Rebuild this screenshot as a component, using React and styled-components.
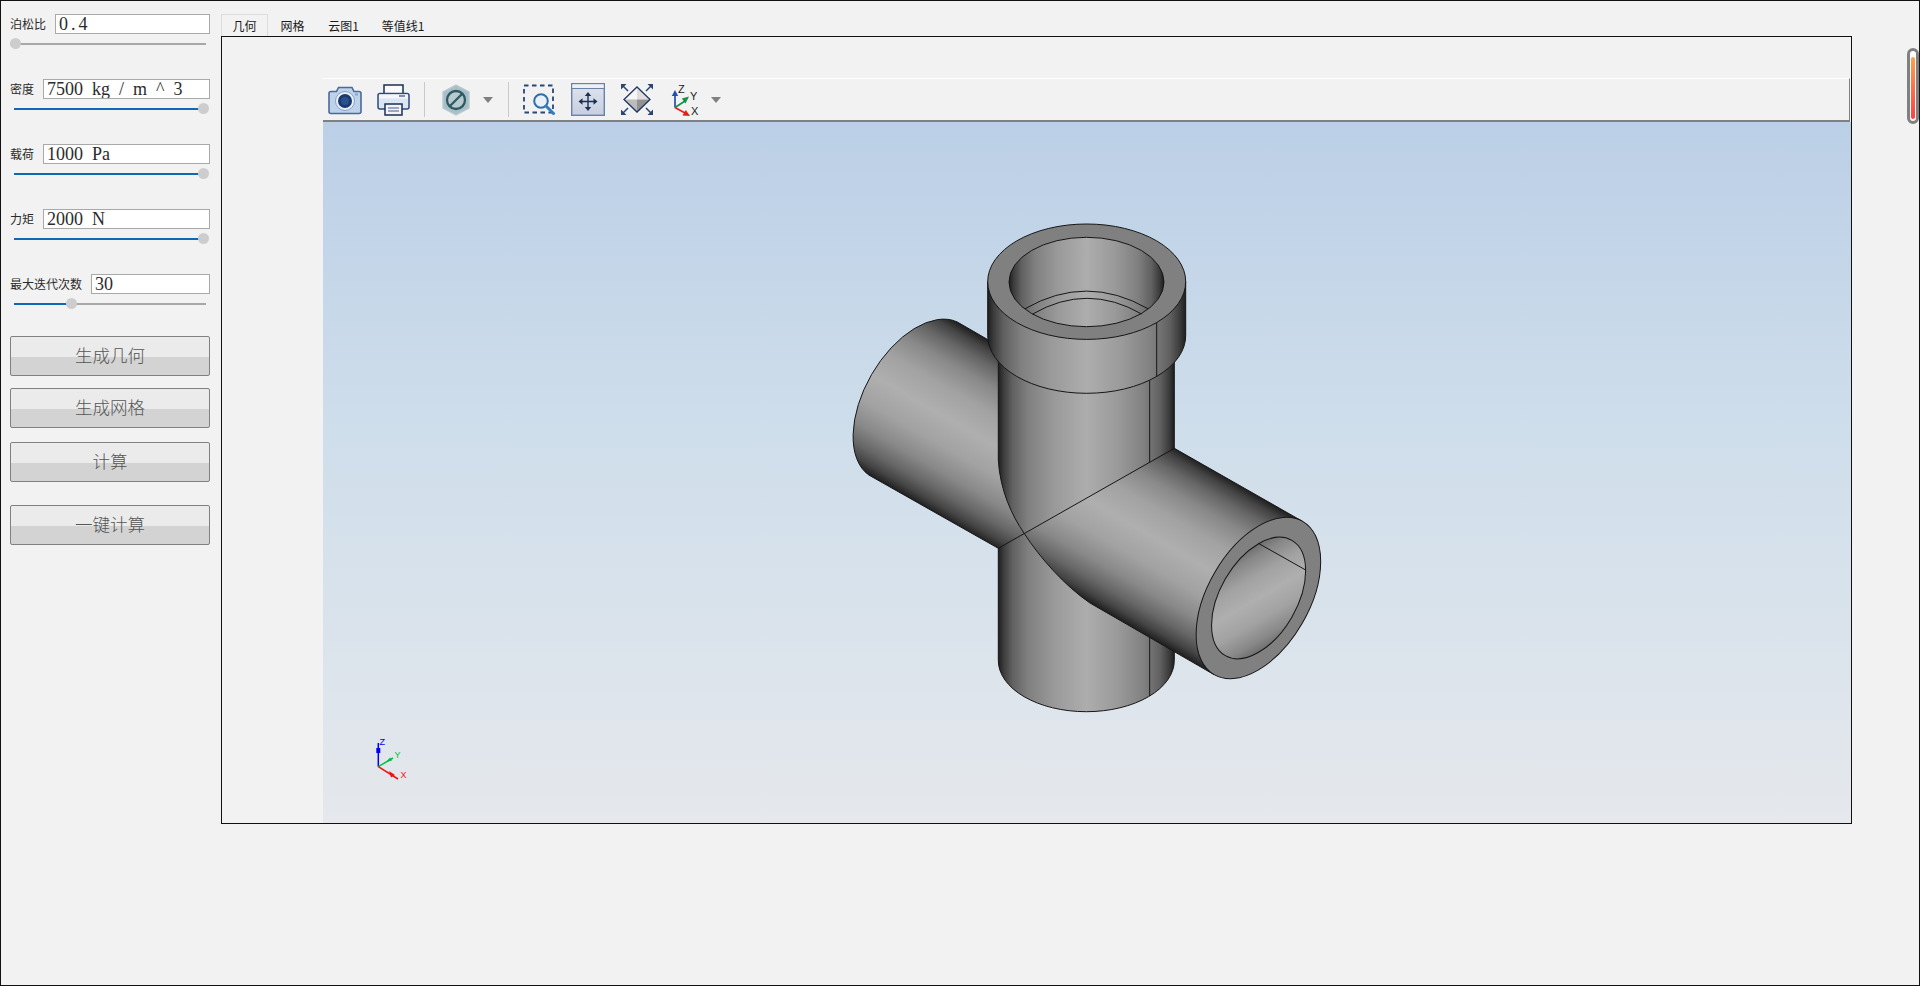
import React from 'react';
import styled, { createGlobalStyle } from 'styled-components';

const Global = createGlobalStyle`
  html, body { margin: 0; padding: 0; background: #f2f2f2; width: 1920px; height: 986px; overflow: hidden; }
  * { box-sizing: border-box; }
`;
const CJK = '"Noto Sans CJK SC", "Noto Sans", sans-serif';

const Window = styled.div`
  width: 1920px; height: 986px; border: 1px solid #111; background: #f2f2f2;
  display: flex; overflow: hidden; font-family: ${CJK}; color: #222;
`;
const Sidebar = styled.aside`
  width: 200px; margin: 13px 0 0 9px; flex: none; display: flex; flex-direction: column;
`;
const FieldRow = styled.div`display: flex; align-items: center; height: 20px; gap: 9px;`;
const FieldLabel = styled.label`font-size: 12px; line-height: 20px; white-space: nowrap; color: #2a2a2a;`;
const FieldInput = styled.input`
  flex: 1; min-width: 0; height: 20px; border: 1px solid #a9a9a9; background: #fff; padding: 0 3px;
  font: 18px/18px "Liberation Serif", serif; word-spacing: 4.5px; letter-spacing: ${p => p.$track || 0}px;
  color: #2b2b2b; outline: none; border-radius: 0;
`;
const SliderBox = styled.div`position: relative; height: 20px; margin-bottom: 25px;`;
const Track = styled.div`
  position: absolute; left: ${p => p.$start}px; right: 4px; top: 9px; height: 2px; background: #a8a8a8;
`;
const Fill = styled.div`height: 100%; background: #1067b5;`;
const Thumb = styled.div`
  position: absolute; top: 4px; width: 11px; height: 11px; margin-left: -5.5px; border-radius: 50%;
  background: #cdcdcd;
`;
const ActionButton = styled.button`
  display: block; width: 200px; height: 40px; margin: ${p => p.$top}px 0 0; padding: 0 0 2px;
  border: 1px solid #808080; border-radius: 2px;
  background: linear-gradient(#ebebeb 0, #ebebeb 52%, #d3d3d3 52%, #d3d3d3 100%);
  font: 300 17.5px/1 ${CJK}; color: #555;
`;
const Main = styled.main`width: 1631px; margin: 13px 0 0 11px; flex: none; display: flex; flex-direction: column;`;
const TabBar = styled.div`display: flex; height: 22px;`;
const Tab = styled.div`
  width: ${p => p.$w}px; height: 22px; font-size: 12px; line-height: 22px; text-align: center; color: #1a1a1a;
  border: 1px solid ${p => (p.$active ? '#dcdcdc' : 'transparent')}; border-bottom: 0;
`;
const Frame = styled.section`
  height: 788px; border: 1px solid #111; padding: 41px 0 0 101px; display: flex; flex-direction: column;
`;
const Toolbar = styled.div`
  height: 44px; flex: none; display: flex; align-items: center; padding-left: 5px; background: #f2f2f2;
  border-top: 1px solid #fff; border-bottom: 2px solid #808080; border-right: 1px solid #808080; margin-right: 1px;
`;
const Tool = styled.svg`display: block; flex: none; margin-left: ${p => p.$gap || 0}px;`;
const Sep = styled.div`width: 1px; height: 35px; background: #c9c9c9; flex: none; margin-left: ${p => p.$gap}px;`;
const Caret = styled.div`
  width: 0; height: 0; flex: none; margin-left: ${p => p.$gap}px;
  border-left: 5px solid transparent; border-right: 5px solid transparent; border-top: 6px solid #808080;
`;
const Canvas = styled.div`flex: 1; background: linear-gradient(#bbcfe6 0%, #cfdeeb 45%, #e5e8ec 100%);`;
const Scene = styled.svg`display: block; width: 1528px; height: 700px;`;
const ScrollRail = styled.div`
  width: 12px; height: 76px; flex: none; margin: 47px 0 0 55px; border: 3px solid #808080; border-radius: 6px;
  background: #fff; padding: 6px 1px 2px;
`;
const ScrollInner = styled.div`
  height: 100%; border-radius: 2px; background: linear-gradient(#ff9f4f, #ff4040);
`;

const Slider = ({ start, pos, fill }) => (
  <SliderBox>
    <Track $start={start}>{fill > 0 && <Fill style={{ width: fill }} />}</Track>
    <Thumb style={{ left: pos }} />
  </SliderBox>
);

const fields = [
  { label: '泊松比', value: '0.4', track: 3, start: 0, pos: 5, fill: 0 },
  { label: '密度', value: '7500 kg / m ^ 3', start: 4, pos: 193, fill: 189 },
  { label: '载荷', value: '1000 Pa', start: 4, pos: 193, fill: 189 },
  { label: '力矩', value: '2000 N', start: 4, pos: 193, fill: 189 },
  { label: '最大迭代次数', value: '30', start: 4, pos: 61, fill: 57 },
];

const INK = '#1b2f55';
const SANS = 'Liberation Sans, sans-serif';

const Camera = () => (
  <Tool width="34" height="30" viewBox="0 0 34 30">
    <path d="M1 8.500Q1 6.500 3 6.500H8.500L10.500 2.500H24L26 6.500H31Q33 6.500 33 8.500V26.500Q33 28.500 31 28.500H3Q1 28.500 1 26.500Z" fill="#bfd2ec" stroke="#4a6a9a" strokeWidth="1.600" />
    <circle cx="17" cy="16" r="9.500" fill="#eaf0f8" stroke="#86a2c8" />
    <circle cx="17" cy="16" r="7" fill="#1d3a6e" />
    <circle cx="17" cy="16" r="4" fill="#2a5291" />
    <rect x="27" y="8.500" width="3" height="2" fill="#8aa2c4" />
  </Tool>
);
const Printer = () => (
  <Tool width="33" height="33" viewBox="0 0 33 33" $gap={15}>
    <path d="M7 12V2H26V12" fill="#fafafa" stroke={INK} strokeWidth="1.500" />
    <path d="M3 10.500H30Q32 10.500 32 12.500V24Q32 26 30 26H3Q1 26 1 24V12.500Q1 10.500 3 10.500Z" fill="#dbe5f3" stroke="#2f4a7c" strokeWidth="1.500" />
    <rect x="2" y="11.500" width="29" height="4" fill="#f4f6fa" />
    <rect x="22" y="12" width="6" height="2" fill="#7d8fb0" />
    <path d="M8 21H25V32H8Z" fill="#f3f3f3" stroke={INK} strokeWidth="1.500" />
    <path d="M11 25H22M11 28H22" stroke="#7d8fb0" strokeWidth="1.300" />
  </Tool>
);
const Hex = () => (
  <Tool width="28" height="32" viewBox="0 0 28 32" $gap={17}>
    <path d="M14 1L27 8V24L14 31L1 24V8Z" fill="#a8bfc6" stroke="#b7cbd0" strokeWidth="1.400" />
    <circle cx="14" cy="16" r="9" fill="#b7cace" stroke="#2f5964" strokeWidth="2.300" />
    <path d="M8 22L20 10" stroke="#2f5964" strokeWidth="2.300" />
  </Tool>
);
const ZoomFit = () => (
  <Tool width="32" height="32" viewBox="0 0 32 32" $gap={14}>
    <rect x="1" y="1.500" width="29" height="27" fill="none" stroke="#2a4674" strokeWidth="1.800" strokeDasharray="4.500 3.500" />
    <circle cx="18" cy="17" r="6.800" fill="#e9f0f8" stroke="#2f6fa8" strokeWidth="2" />
    <path d="M23 22L30.500 29.500" stroke="#2f7fc1" strokeWidth="3" strokeLinecap="round" />
  </Tool>
);
const Arrow4 = ({ c }) => (
  <g fill={c} stroke={c}>
    <path d="M17 11V26M9.500 18.500H24.500" strokeWidth="1.400" />
    <path d="M17 9L13.800 13H20.200ZM17 28L13.800 24H20.200ZM7.500 18.500L11.500 15.300V21.700ZM26.500 18.500L22.500 15.300V21.700Z" stroke="none" />
  </g>
);
const Fit = () => (
  <Tool width="34" height="33" viewBox="0 0 34 33" $gap={16}>
    <defs>
      <linearGradient id="fitBg" x1="0" y1="0" x2="0" y2="1">
        <stop offset="0" stopColor="#dfe4ee" />
        <stop offset="1" stopColor="#c6cfe0" />
      </linearGradient>
    </defs>
    <rect x="0.700" y="0.700" width="32.600" height="31.600" fill="url(#fitBg)" stroke="#6a82a6" strokeWidth="1.400" />
    <rect x="1.400" y="1.400" width="31.200" height="3.500" fill="#eef0f5" />
    <path d="M1 5.500H33" stroke="#6a82a6" strokeWidth="1" />
    <Arrow4 c={INK} />
  </Tool>
);
const Iso = () => (
  <Tool width="34" height="33" viewBox="0 0 34 33" $gap={15}>
    <path d="M17 4L17 16.500H4Z" fill="#f6f6f6" />
    <path d="M17 4L30 16.500H17Z" fill="#dedede" />
    <path d="M4 16.500H17V29Z" fill="#bcbcbc" />
    <path d="M17 16.500H30L17 29Z" fill="#929292" />
    <path d="M17 4L30 16.500L17 29L4 16.500Z" fill="none" stroke="#20365f" strokeWidth="1.300" />
    <path d="M8 8L3 3M26 8L31 3M8 25L3 30M26 25L31 30" stroke="#2a4674" strokeWidth="1.500" />
    <path d="M1 1H6.500L1 6.500ZM33 1H27.500L33 6.500ZM1 32H6.500L1 26.500ZM33 32H27.500L33 26.500Z" fill="#2a4674" />
  </Tool>
);
const Triad = () => (
  <Tool width="31" height="34" viewBox="0 0 31 34" $gap={15}>
    <path d="M6 24.500V11" stroke="#1f4fb5" strokeWidth="1.700" />
    <path d="M6 7L2.800 13H9.200Z" fill="#1f4fb5" />
    <path d="M6 24.500L16 18" stroke="#15924a" strokeWidth="1.700" />
    <path d="M20 13.500L12.800 15.500L16.500 20.500Z" fill="#15924a" />
    <path d="M6 24.500L16 30" stroke="#e02020" strokeWidth="1.700" />
    <path d="M21 33L13.500 32.500L16.800 27Z" fill="#e02020" />
    <text x="9" y="9.500" fontSize="11" fontFamily={SANS} fill="#222">Z</text>
    <text x="21" y="17" fontSize="11" fontFamily={SANS} fill="#222">Y</text>
    <text x="22" y="31.500" fontSize="11" fontFamily={SANS} fill="#222">X</text>
  </Tool>
);

const bodyStops = [
  [0, '#1e1e1e'], [0.03, '#3c3c3c'], [0.08, '#606060'], [0.17, '#808080'], [0.32, '#9a9a9a'], [0.5, '#adadad'],
  [0.68, '#9a9a9a'], [0.83, '#808080'], [0.92, '#606060'], [0.97, '#3c3c3c'], [1, '#1e1e1e'],
];
const armStops = [
  [0, '#1e1e1e'], [0.05, '#444444'], [0.12, '#666666'], [0.22, '#888888'], [0.35, '#a2a2a2'], [0.5, '#afafaf'],
  [0.65, '#a2a2a2'], [0.78, '#888888'], [0.88, '#666666'], [0.95, '#444444'], [1, '#1e1e1e'],
];
const Grad = ({ id, x1, y1, x2, y2, stops }) => (
  <linearGradient id={id} gradientUnits="userSpaceOnUse" x1={x1} y1={y1} x2={x2} y2={y2}>
    {stops.map(([o, c]) => <stop key={o} offset={o} stopColor={c} />)}
  </linearGradient>
);

const Model = () => (
  <g stroke="#161616" strokeWidth="1" strokeLinejoin="round">
    <path d="M998.300 300V660.400A88 51.300 0 0 0 1174.300 660.400V300Z" fill="url(#gBody)" />
    <path d="M1149.700 380V696" fill="none" />
    <path d="M957.300 322L998.300 345.700V460C1000 490 1012 516 1024.300 533.500L998.300 548.300L868.800 475A88.500 50.600 -60 0 1 957.300 322Z" fill="url(#gLeft)" />
    <path d="M1174.300 448.300L1302.600 521.400L1214 674.600L1090 603C1065 586 1040 558 1024.300 533.500Z" fill="url(#gRight)" />
    <ellipse cx="1258.400" cy="598" rx="88.500" ry="50.600" transform="rotate(-60 1258.400 598)" fill="#808080" />
    <ellipse cx="1258.600" cy="598" rx="66.500" ry="38.400" transform="rotate(-60 1258.600 598)" fill="url(#gBore)" />
    <path d="M1258.300 543.300L1305.700 570" fill="none" />
    <path d="M987.700 281.700V335.600A99 57.700 0 0 0 1185.700 335.600V281.700Z" fill="url(#gCollar)" />
    <path d="M1156.700 322.700V376.700" fill="none" />
    <ellipse cx="1086.700" cy="281.700" rx="99" ry="57.700" fill="#808080" />
    <ellipse cx="1086.500" cy="282" rx="77.500" ry="44.700" fill="url(#gInner)" />
    <path d="M1025 308.700Q1086.500 273.500 1148 308.700" fill="none" />
    <path d="M1032.700 314Q1087 282.600 1141.700 314" fill="none" />
  </g>
);

const MiniTriad = () => (
  <g>
    <path d="M378.300 766.700V743" stroke="#0000ee" strokeWidth="1.500" />
    <rect x="376.300" y="748" width="4" height="5" fill="#0000ee" />
    <path d="M378.300 766.700L393 758" stroke="#00c040" strokeWidth="1.500" />
    <path d="M386 762L390 757.500L392 760.500Z" fill="#00c040" />
    <path d="M378.300 766.700L398 779" stroke="#f01010" strokeWidth="1.500" />
    <path d="M389 771L395 775L391 777.500Z" fill="#f01010" />
    <text x="379.500" y="745" fontSize="9" fontFamily={SANS} fill="#0000ee">Z</text>
    <text x="394.500" y="758" fontSize="9" fontFamily={SANS} fill="#00c040">Y</text>
    <text x="400.500" y="778" fontSize="9" fontFamily={SANS} fill="#f01010">X</text>
  </g>
);

export default function App() {
  return (
    <Window>
      <Global />
      <Sidebar>
        {fields.map(f => (
          <div key={f.label}>
            <FieldRow>
              <FieldLabel>{f.label}</FieldLabel>
              <FieldInput readOnly value={f.value} $track={f.track} />
            </FieldRow>
            <Slider start={f.start} pos={f.pos} fill={f.fill} />
          </div>
        ))}
        <ActionButton $top={-3}>生成几何</ActionButton>
        <ActionButton $top={12}>生成网格</ActionButton>
        <ActionButton $top={14}>计算</ActionButton>
        <ActionButton $top={23}>一键计算</ActionButton>
      </Sidebar>
      <Main>
        <TabBar>
          <Tab $active $w={47}>几何</Tab>
          <Tab $w={49}>网格</Tab>
          <Tab $w={53}>云图1</Tab>
          <Tab $w={66}>等值线1</Tab>
        </TabBar>
        <Frame>
          <Toolbar>
            <Camera />
            <Printer />
            <Sep $gap={14} />
            <Hex />
            <Caret $gap={13} />
            <Sep $gap={15} />
            <ZoomFit />
            <Fit />
            <Iso />
            <Triad />
            <Caret $gap={11} />
          </Toolbar>
          <Canvas>
            <Scene viewBox="323 122 1528 700">
              <defs>
                <Grad id="gBody" x1="998.300" y1="0" x2="1174.300" y2="0" stops={bodyStops} />
                <Grad id="gCollar" x1="987.700" y1="0" x2="1185.700" y2="0" stops={bodyStops} />
                <Grad id="gInner" x1="1009" y1="0" x2="1164" y2="0" stops={bodyStops} />
                <Grad id="gLeft" x1="957.300" y1="322" x2="868.800" y2="475" stops={armStops} />
                <Grad id="gRight" x1="1302.600" y1="521.400" x2="1214" y2="674.600" stops={armStops} />
                <Grad id="gBore" x1="1292" y1="540.400" x2="1225.400" y2="655.600" stops={armStops} />
              </defs>
              <Model />
              <MiniTriad />
            </Scene>
          </Canvas>
        </Frame>
      </Main>
      <ScrollRail><ScrollInner /></ScrollRail>
    </Window>
  );
}
